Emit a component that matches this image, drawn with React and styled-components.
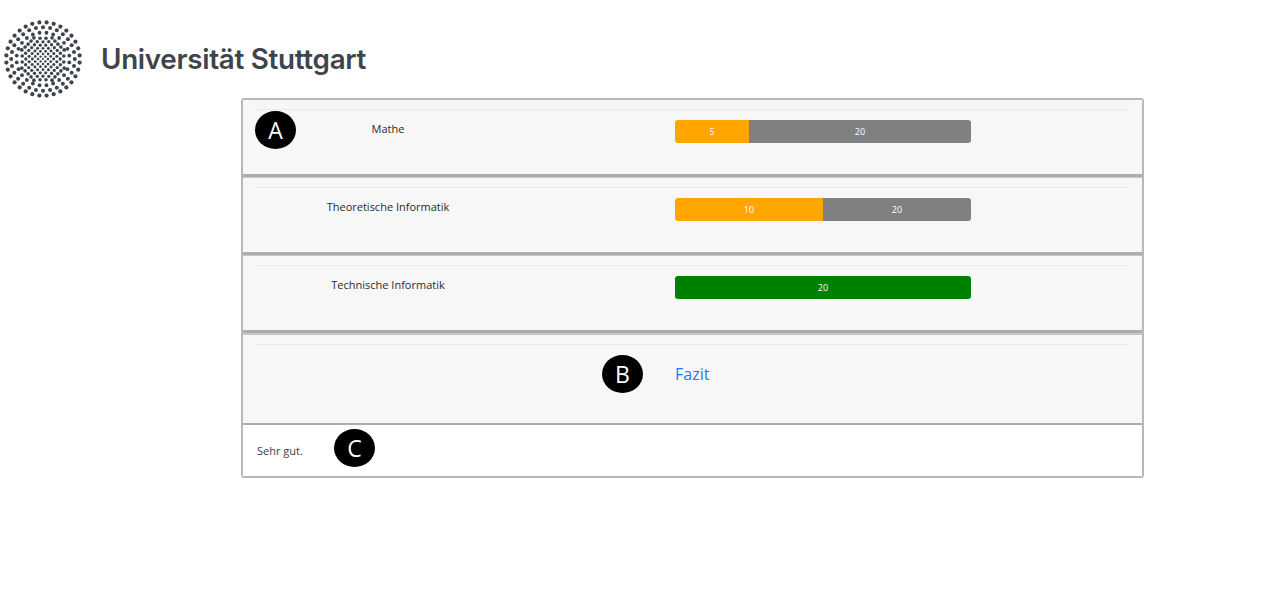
import React from "react";
import styled, { createGlobalStyle } from "styled-components";

const Global = createGlobalStyle`
  html, body { margin: 0; padding: 0; background: #fff; }
  body { font-family: "Open Sans", "Noto Sans", sans-serif; color: #212529; }
`;
const Page = styled.div`
  width: 1268px;
  height: 607px;
  overflow: hidden;
`;
const Header = styled.header`
  height: 98px;
  display: flex;
  align-items: flex-start;
  padding: 20px 0 0 3px;
  box-sizing: border-box;
  gap: 18px;
`;
const Wordmark = styled.div`
  font-family: "Inter", "Liberation Sans", sans-serif;
  font-weight: 600;
  font-size: 27.8px;
  line-height: 32px;
  letter-spacing: -0.3px;
  color: #3e444c;
  margin-top: 23px;
  white-space: nowrap;
`;
const Card = styled.main`
  position: relative;
  width: 903px;
  margin-left: 241px;
  display: flex;
  flex-direction: column;
  box-sizing: border-box;
  border: 2px solid #b8b8b8;
  border-radius: 3px;
  background: #c6c6c6;
`;
const Section = styled.section`
  height: ${(p) => p.$h}px;
  box-sizing: border-box;
  background: #f7f7f7;
  padding: 9px 14px 0 13px;
  border-bottom: ${(p) => p.$line}px solid #adadad;
  margin-bottom: ${(p) => p.$gap}px;
`;
const Rule = styled.hr`
  margin: 0 0 10px;
  border: 0;
  border-top: 1px solid #e9e9e9;
`;
const Row = styled.div`
  display: grid;
  grid-template-columns: 264px 155px 296px;
  align-items: start;
`;
const Label = styled.div`
  grid-column: 1;
  text-align: center;
  font-size: 11px;
  line-height: 18px;
  color: #2b2b2b;
`;
const Bar = styled.div`
  grid-column: 3;
  display: flex;
  height: 23px;
  border-radius: 3px;
  overflow: hidden;
`;
const Segment = styled.div`
  flex: ${(p) => p.$grow} 0 0;
  display: flex;
  align-items: center;
  justify-content: center;
  background: ${(p) => p.$color};
  color: #fff;
  font-size: 9px;
`;
const Heading = styled.a`
  grid-column: 3;
  font-size: 16px;
  line-height: 24px;
  margin-top: 7px;
  color: #1a7aff;
`;
const Note = styled.div`
  background: #fff;
  height: 51px;
  padding: 0 14px;
  display: flex;
  align-items: center;
  font-size: 11px;
  color: #3a3f44;
`;
const Badge = styled.div`
  position: absolute;
  left: ${(p) => p.$x}px;
  top: ${(p) => p.$y}px;
  width: 41px;
  height: 38px;
  border-radius: 50%;
  background: #000;
  color: #fff;
  display: flex;
  align-items: center;
  justify-content: center;
  font-size: 23px;
  line-height: 1;
`;

const CX = 40;
const CY = 39;
const dots = [];
for (let i = -7; i <= 7; i++) {
  for (let j = -7; j <= 7; j++) {
    const v = Math.hypot(i, j);
    if (v > 5.4) continue;
    const R = v * (3.2 + 0.2 * v);
    const a = Math.atan2(j, i) + Math.PI / 4;
    dots.push({
      x: CX + R * Math.cos(a),
      y: CY + R * Math.sin(a),
      r: 1.1 + R / 30,
    });
  }
}
[
  [26.5, 24, 0.5, 1.9],
  [31.8, 28, 0, 2],
  [36.8, 32, 0.5, 2.1],
].forEach(([R, n, off, r]) => {
  for (let k = 0; k < n; k++) {
    const a = ((k + off) / n) * 2 * Math.PI;
    dots.push({ x: CX + R * Math.cos(a), y: CY + R * Math.sin(a), r });
  }
});

const Logo = () => (
  <svg width="80" height="78" viewBox="0 0 80 78" aria-label="Logo" style={{ overflow: "visible" }}>
    {dots.map((d, i) => (
      <circle key={i} cx={d.x} cy={d.y} r={d.r} fill="#3e444c" />
    ))}
  </svg>
);

const subjects = [
  { name: "Mathe", segs: [[5, "orange", 74], [20, "gray", 222]] },
  { name: "Theoretische Informatik", segs: [[10, "orange", 148], [20, "gray", 148]] },
  { name: "Technische Informatik", segs: [[20, "green", 296]] },
];

export default function App() {
  return (
    <Page>
      <Global />
      <Header>
        <Logo />
        <Wordmark>Universität Stuttgart</Wordmark>
      </Header>
      <Card>
        {subjects.map((s, i) => (
          <Section key={s.name} $h={77} $line={3} $gap={i === 2 ? 2 : 1}>
            <Rule />
            <Row>
              <Label>{s.name}</Label>
              <Bar>
                {s.segs.map(([v, c, w]) => (
                  <Segment key={c} $color={c} $grow={w}>{v}</Segment>
                ))}
              </Bar>
            </Row>
          </Section>
        ))}
        <Section $h={90} $line={2} $gap={0}>
          <Rule />
          <Row>
            <Heading>Fazit</Heading>
          </Row>
        </Section>
        <Note>Sehr gut.</Note>
        <Badge $x={12} $y={11}>A</Badge>
        <Badge $x={359} $y={255}>B</Badge>
        <Badge $x={91} $y={329}>C</Badge>
      </Card>
    </Page>
  );
}
